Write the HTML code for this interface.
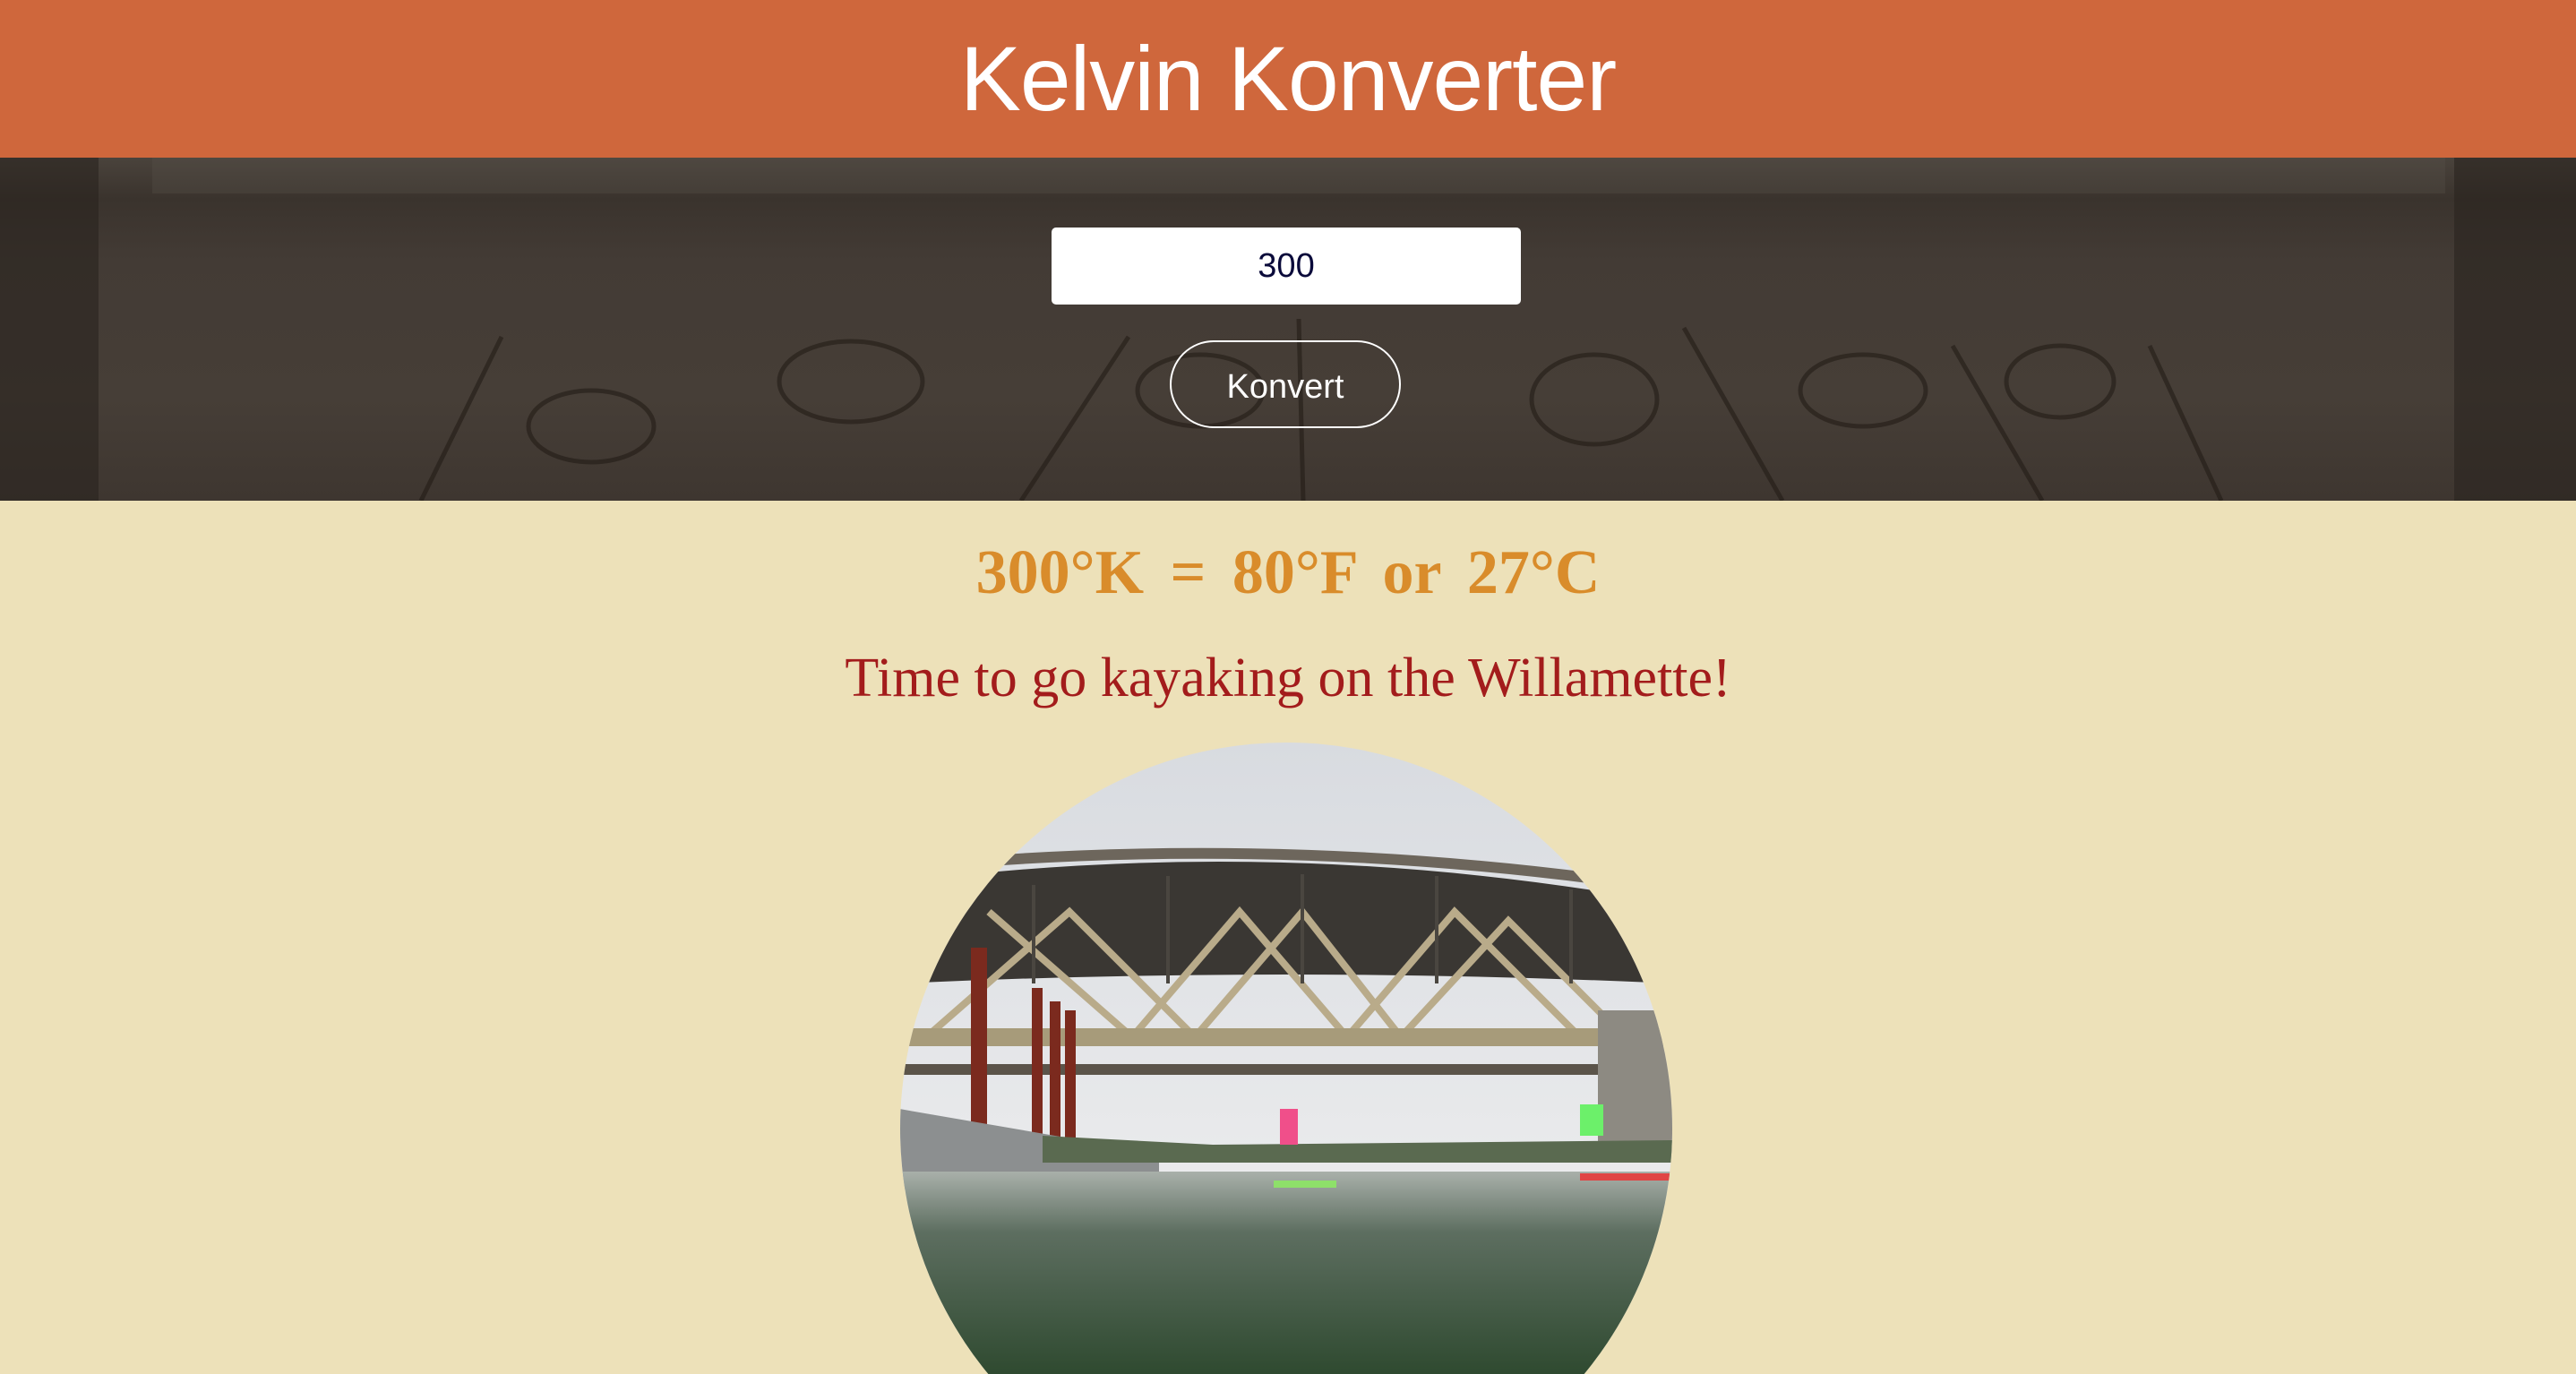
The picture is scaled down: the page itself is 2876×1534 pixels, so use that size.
<!DOCTYPE html>
<html><head><meta charset="utf-8"><style>
html,body{margin:0;padding:0;width:2876px;height:1534px;overflow:hidden;background:#ede1b9}
.hdr{height:176px;background:#cf673c;text-align:center;color:#fff;font-family:"Liberation Sans",sans-serif;font-size:102px;line-height:176px;letter-spacing:-1px}
.hero{position:relative;height:383px;background:linear-gradient(180deg,#4a433c 0%,#3a332d 12%,#433b35 30%,#463e37 70%,#3e3630 100%);overflow:hidden}
.inp{position:absolute;left:1174px;top:78px;width:524px;height:86px;background:#fff;border-radius:5px;text-align:center;font-family:"Liberation Sans",sans-serif;font-size:38px;line-height:86px;color:#0a0a3a}
.btn{position:absolute;left:1306px;top:204px;width:258px;height:98px;border:2px solid #fff;border-radius:50px;box-sizing:border-box;text-align:center;color:#fff;font-family:"Liberation Sans",sans-serif;font-size:38px;line-height:100px}
.res{position:absolute;top:600px;left:0;width:2876px;text-align:center;color:#d98c2b;font-family:"Liberation Serif",serif;font-weight:bold;font-size:70px;word-spacing:12px}
.sub{position:absolute;top:722px;left:0;width:2876px;text-align:center;color:#a31c1c;font-family:"Liberation Serif",serif;font-size:62px}
svg.ph{position:absolute;left:1004px;top:828px}
</style></head><body>
<div class="hdr">Kelvin Konverter</div>
<div class="hero">
<svg width="2876" height="383" style="position:absolute;left:0;top:0" fill="none" stroke="#231c16" stroke-width="5" opacity="0.6">
<rect x="0" y="0" width="110" height="383" fill="#2a241f" stroke="none"/>
<rect x="2740" y="0" width="136" height="383" fill="#2a241f" stroke="none"/>
<rect x="170" y="0" width="2560" height="40" fill="#5a534b" stroke="none" opacity="0.5"/>
<path d="M470 383 L560 200"/><ellipse cx="660" cy="300" rx="70" ry="40"/>
<ellipse cx="950" cy="250" rx="80" ry="45"/><path d="M1140 383 L1260 200"/>
<ellipse cx="1340" cy="260" rx="70" ry="40"/><path d="M1450 180 L1455 383"/>
<ellipse cx="1780" cy="270" rx="70" ry="50"/><path d="M1880 190 L1990 383"/>
<ellipse cx="2080" cy="260" rx="70" ry="40"/><path d="M2180 210 L2280 383"/>
<ellipse cx="2300" cy="250" rx="60" ry="40"/><path d="M2400 210 L2480 383"/>
</svg>
<div class="inp">300</div>
<div class="btn">Konvert</div>
</div>
<div class="res">300°K = 80°F or 27°C</div>
<div class="sub">Time to go kayaking on the Willamette!</div>
<svg class="ph" width="864" height="706" viewBox="0 0 864 706">
<defs><clipPath id="c"><circle cx="432" cy="432" r="431"/></clipPath>
<linearGradient id="sky" x1="0" y1="0" x2="0" y2="1"><stop offset="0" stop-color="#d8dbe0"/><stop offset="1" stop-color="#f2f2f2"/></linearGradient>
<linearGradient id="w" x1="0" y1="0" x2="0" y2="1"><stop offset="0" stop-color="#a9b0aa"/><stop offset="0.3" stop-color="#5d6e60"/><stop offset="1" stop-color="#2f4a30"/></linearGradient></defs>
<g clip-path="url(#c)">
<rect width="864" height="706" fill="url(#sky)"/>
<path d="M60 150 Q430 110 800 170 L864 240 L864 270 Q430 250 0 270 L0 230Z" fill="#3a3733"/>
<path d="M60 130 Q430 100 800 150 L800 162 Q430 112 60 142Z" fill="#6d665c"/>
<g stroke="#b9ab8a" stroke-width="8" fill="none">
<path d="M30 330 L190 190 L330 330 L450 190 L560 330 L680 200 L820 340"/>
<path d="M100 190 L260 330 L380 190 L500 330 L620 190 L760 330"/>
</g>
<g stroke="#4a4640" stroke-width="4">
<path d="M150 160 V270 M300 150 V270 M450 148 V270 M600 150 V270 M750 165 V270"/>
</g>
<rect x="0" y="320" width="864" height="20" fill="#a79b7a"/>
<rect x="0" y="360" width="800" height="12" fill="#5b544a"/>
<rect x="780" y="300" width="84" height="170" fill="#8d8a82"/>
<rect x="80" y="230" width="18" height="210" fill="#7b2a1e"/>
<rect x="148" y="275" width="12" height="170" fill="#7b2a1e"/>
<rect x="168" y="290" width="12" height="160" fill="#7b2a1e"/>
<rect x="185" y="300" width="12" height="150" fill="#7b2a1e"/>
<path d="M0 410 L290 460 L290 490 L0 500Z" fill="#8c8f90"/>
<path d="M160 440 L350 450 L864 445 L864 470 L160 470Z" fill="#5a6a50"/>
<rect x="0" y="480" width="864" height="226" fill="url(#w)"/>
<rect x="425" y="410" width="20" height="40" fill="#f04f8a"/>
<rect x="760" y="405" width="26" height="35" fill="#6cf06a"/>
<rect x="418" y="490" width="70" height="8" fill="#8ee06a"/>
<rect x="760" y="482" width="100" height="8" fill="#e04545"/>
</g>
</svg>
</body></html>
